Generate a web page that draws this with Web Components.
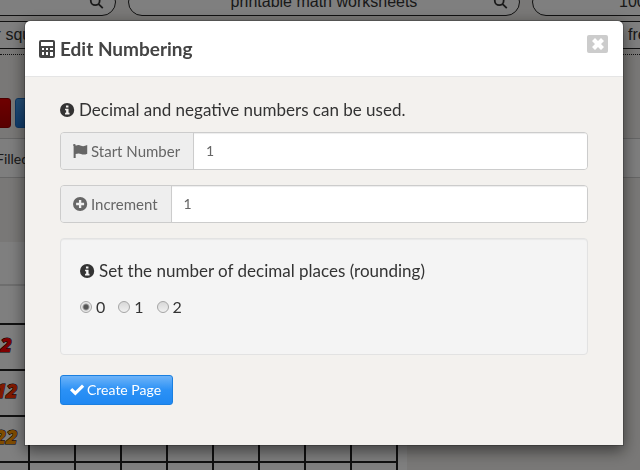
<!DOCTYPE html>
<html lang="en">
<head>
<meta charset="utf-8">
<title>Edit Numbering</title>
<style>
html, body { margin: 0; height: 100%; }
body {
	overflow: hidden;
	font: 16px/24px "Century Gothic", Lato, sans-serif;
	color: #333;
}
</style>
</head>
<body>
<sheet-page></sheet-page>
<modal-dialog heading="Edit Numbering">
	<info-text>Decimal and negative numbers can be used.</info-text>
	<number-field label="Start Number" icon="flag" value="1"></number-field>
	<number-field label="Increment" icon="plus" value="1"></number-field>
	<option-well>
		<info-text>Set the number of decimal places (rounding)</info-text>
		<radio-list label="Decimal places" options="0,1,2"></radio-list>
	</option-well>
	<action-button icon="check">Create Page</action-button>
</modal-dialog>

<script>
const ICONS = {
	calculator: `<path fill-rule="evenodd" d="M2 0h12q2 0 2 2v14q0 2-2 2H2q-2 0-2-2V2q0-2 2-2zM2 2v4h12V2zM3 8v2h2V8zM7 8v2h2V8zM11 8v2h3V8zM3 12v3h2v-3zM7 12v3h2v-3zM11 12v4h3v-4z"/>`,
	info: `<path fill-rule="evenodd" d="M8 1a8 8 0 1 0 0 16A8 8 0 0 0 8 1zM6.7 4h2.8v2.3H6.7zM5.7 7.5h3.9v4.7h1.1v1.9h-5v-1.9h1.2V9.4H5.7z"/>`,
	flag: `<path d="M0 2.5a1.5 1.5 0 0 1 3 0V3C5 2 7 1.8 9 3c2 1 4.5.5 7-.7v9.7c-2.5 1.3-5 1.3-7 .3-2-1-4-.7-6 .2V17H.7V3.5z"/>`,
	plus: `<path fill-rule="evenodd" d="M8 1a8 8 0 1 0 0 16A8 8 0 0 0 8 1zM6.7 4.5h2.6v3.2h3.2v2.6H9.3v3.2H6.7v-3.2H3.5V7.7h3.2z"/>`,
	check: `<path d="M0 9.2l2.500-2.500L6 10.200 13.500 2.800 16 5.300 6 15.200z"/>`,
	search: `<path fill="none" stroke="currentColor" stroke-width="2" d="M12 7.500a5 5 0 1 1-10 0a5 5 0 1 1 10 0M10.500 11l5 5"/>`,
	close: `<path d="M2 5l3-3 3 3 3-3 3 3-3 3 3 3-3 3-3-3-3 3-3-3 3-3z"/>`
};

function icon(name, size = 16, box = "0 0 16 18") {
	return `<svg viewBox="${box}" width="${size}" height="${size}" preserveAspectRatio="xMinYMid" fill="currentColor" aria-hidden="true">${ICONS[name]}</svg>`;
}

class BaseElement extends HTMLElement {
	constructor() {
		super();
		this.attachShadow({mode:"open"});
	}

	connectedCallback() {
		this.shadowRoot.innerHTML = `<style>:host, * { box-sizing: border-box; } svg { flex: none; }</style>` + this.render();
	}
}

class InfoText extends BaseElement {
	render() {
		return `
<style>
:host { display: flex; align-items: center; gap: 3px; font-size: 17px; }
</style>
${icon("info")}
<span><slot></slot></span>`;
	}
}

class NumberField extends BaseElement {
	render() {
		return `
<style>
:host { display: flex; height: 38px; border: 1px solid #ccc; border-radius: 4px; overflow: hidden; }
label {
	display: flex;
	align-items: center;
	gap: 2px;
	padding: 0 13px 0 12px;
	background: #eee;
	border-right: 1px solid #ccc;
	color: #666;
	font-size: 15px;
	white-space: nowrap;
}
input {
	flex: 1;
	min-width: 0;
	border: 0;
	padding: 0 12px;
	background: #fff;
	box-shadow: inset 0 1px 1px #00000013;
	color: #666;
	font: inherit;
	font-size: 14px;
	outline: 0;
}
</style>
<label for="field">${icon(this.getAttribute("icon"))}${this.getAttribute("label")}</label>
<input id="field" value="${this.getAttribute("value")}">`;
	}
}

class OptionWell extends BaseElement {
	render() {
		return `
<style>
:host {
	display: flex;
	flex-direction: column;
	gap: 12px;
	padding: 20px 19px 35px;
	background: #f4f4f4;
	border: 1px solid #e2e2e2;
	border-radius: 4px;
	box-shadow: inset 0 1px 1px #0000000d;
}
</style>
<slot></slot>`;
	}
}

class RadioList extends BaseElement {
	render() {
		let options = this.getAttribute("options").split(",");
		return `
<style>
:host { display: block; }
fieldset { display: flex; gap: 13px; margin: 0; padding: 0; border: 0; }
label { display: flex; align-items: center; gap: 4px; }
input {
	appearance: none;
	width: 12px;
	height: 12px;
	margin: 0;
	border: 1px solid #a5a5a5;
	border-radius: 50%;
	background: linear-gradient(#d8d8d8, #f0f0f0);
}
input:checked { background: radial-gradient(circle, #555 0 2px, #e8e8e8 4px); }
</style>
<fieldset aria-label="${this.getAttribute("label")}">
	${options.map((o, i) => `<label><input type="radio" name="places" value="${o}"${i ? "" : " checked"}>${o}</label>`).join("")}
</fieldset>`;
	}
}

class ActionButton extends BaseElement {
	render() {
		return `
<style>
:host { display: flex; }
button {
	display: flex;
	align-items: center;
	gap: 1px;
	height: 30px;
	padding: 0 11px 0 9px;
	border: 1px solid #1a7fe0;
	border-radius: 3px;
	background: linear-gradient(#6db3f8, #2b91f6 50%, #1f88f2);
	color: #fff;
	font: inherit;
	font-size: 14px;
}
</style>
<button type="button">${icon(this.getAttribute("icon"))}<slot></slot></button>`;
	}
}

class ModalDialog extends BaseElement {
	render() {
		let heading = this.getAttribute("heading");
		return `
<style>
:host {
	position: fixed;
	inset: 0;
	padding: 20px 16px 0 24px;
	background: #00000080;
}
section {
	max-width: 600px;
	margin: 0 auto;
	border: 1px solid #00000033;
	border-radius: 6px 6px 0 0;
	background: #fff;
	background-clip: padding-box;
	box-shadow: 0 5px 15px #00000080;
}
header {
	display: flex;
	align-items: center;
	gap: 3px;
	height: 56px;
	padding: 0 15px 0 14px;
	border-bottom: 1px solid #e5e5e5;
	color: #444;
}
h4 { flex: 1; margin: 0; font-size: 19px; }
header button {
	display: grid;
	place-items: center;
	align-self: start;
	width: 21px;
	height: 18px;
	margin-top: 14px;
	padding: 0;
	border: 0;
	border-radius: 2px;
	background: #ccc;
	color: #fff;
}
main {
	display: flex;
	flex-direction: column;
	gap: 15px;
	padding: 21px 35px 40px;
	background: #f3f1ee;
}
::slotted(info-text) { margin-bottom: -5px; }
::slotted(action-button) { margin-top: 5px; }
</style>
<section role="dialog" aria-label="${heading}">
	<header>
		${icon("calculator", 18)}
		<h4>${heading}</h4>
		<button type="button" aria-label="Close">${icon("close", 14, "1 1 14 14")}</button>
	</header>
	<main><slot></slot></main>
</section>`;
	}
}

class SearchPill extends BaseElement {
	render() {
		return `
<style>
:host {
	display: flex;
	align-items: center;
	flex: none;
	width: 392px;
	height: 28px;
	padding: 0 10px;
	border: 1px solid #222;
	border-radius: 14px;
	background: #fefefe;
	font: 16px/24px "Liberation Sans", Arial, sans-serif;
	white-space: nowrap;
}
span { flex: 1; margin-left: 16px; text-align: center; }
</style>
<span><slot></slot></span>${icon("search")}`;
	}
}

class NumberChart extends BaseElement {
	render() {
		let colors = ["#f00", "#f30", "#f90", "#fc0"];
		// only the first two columns are filled in, the rest is left to complete
		let rows = colors.map((color, r) => {
			let cells = Array.from({length: 10}, (_, c) => `<td>${c < 2 ? r * 10 + c + 1 : ""}</td>`).join("");
			return `<tr style="color: ${color}">${cells}</tr>`;
		}).join("");
		return `
<style>
:host { display: block; width: 480px; background: #fff; padding: 0 9px; }
header { height: 44px; margin: 0 -9px 37px; border-bottom: 2px solid #ddd; }
table { border-collapse: collapse; table-layout: fixed; width: 462px; }
td {
	height: 46px;
	padding: 0 0 4px;
	border: 2px solid #222;
	text-align: center;
	font: italic 900 20px/24px "Open Sans", sans-serif;
	-webkit-text-stroke: 1px #000;
	paint-order: stroke fill;
}
</style>
<header></header>
<table>${rows}</table>`;
	}
}

class SheetPage extends BaseElement {
	render() {
		return `
<style>
:host { display: block; height: 100%; overflow: hidden; background: #f3f1ee; }
.pills { display: flex; justify-content: center; gap: 12px; padding-left: 8px; }
.first { height: 16px; align-items: flex-end; margin-bottom: 5px; }
.buttons { display: flex; gap: 4px; padding-top: 43px; border-top: 1px dotted #222; margin-top: 5px; }
.buttons button { width: 64px; height: 30px; border: 1px solid #900; border-radius: 3px; background: linear-gradient(#d00, #b00000); }
.buttons button:first-child { margin-left: -53px; }
.buttons .next { background: linear-gradient(#4aa0f0, #1f78d8); border-color: #1a6fc8; }
nav { height: 40px; margin: 10px 0 64px -4px; border: solid #ccc; border-width: 1px 0; background: #fcfcfc; font-size: 14px; line-height: 40px; }
number-chart { margin-left: -73px; }
</style>
<div class="pills first">
	<search-pill></search-pill>
	<search-pill>printable math worksheets</search-pill>
	<search-pill>100 chart printable worksheets</search-pill>
</div>
<div class="pills">
	<search-pill>printable worksheet of number square</search-pill>
	<search-pill></search-pill>
	<search-pill>free online math worksheets</search-pill>
</div>
<div class="buttons">
	<button type="button" aria-label="Previous"></button>
	<button type="button" class="next" aria-label="Next"></button>
</div>
<nav>Filled</nav>
<number-chart></number-chart>`;
	}
}

customElements.define("info-text", InfoText);
customElements.define("number-field", NumberField);
customElements.define("option-well", OptionWell);
customElements.define("radio-list", RadioList);
customElements.define("action-button", ActionButton);
customElements.define("modal-dialog", ModalDialog);
customElements.define("search-pill", SearchPill);
customElements.define("number-chart", NumberChart);
customElements.define("sheet-page", SheetPage);
</script>
</body>
</html>
